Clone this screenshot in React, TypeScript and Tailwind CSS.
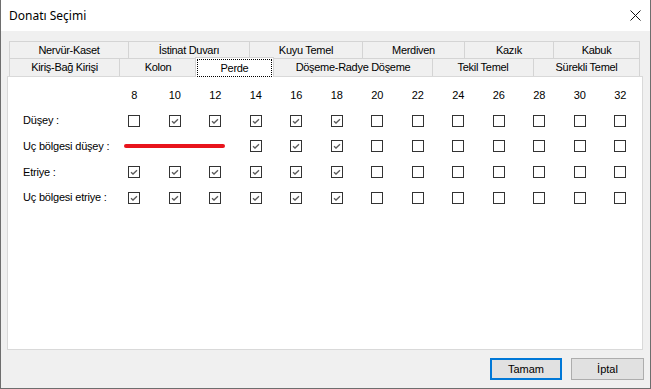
import React from "react";

const row1 = [
  { t: "Nervür-Kaset", w: 119 },
  { t: "İstinat Duvarı", w: 121 },
  { t: "Kuyu Temel", w: 113 },
  { t: "Merdiven", w: 102 },
  { t: "Kazık", w: 89 },
  { t: "Kabuk", w: 87 },
];
const row2 = [
  { t: "Kiriş-Bağ Kirişi", w: 110 },
  { t: "Kolon", w: 77 },
  { t: "Perde", w: 77, sel: true },
  { t: "Döşeme-Radye Döşeme", w: 159 },
  { t: "Tekil Temel", w: 101 },
  { t: "Sürekli Temel", w: 107 },
];

const nums = [8, 10, 12, 14, 16, 18, 20, 22, 24, 26, 28, 30, 32];
const rows: { label: string; checked: number[]; hidden?: number[] }[] = [
  { label: "Düşey :", checked: [10, 12, 14, 16, 18] },
  { label: "Uç bölgesi düşey :", checked: [14, 16, 18], hidden: [8, 10, 12] },
  { label: "Etriye :", checked: [8, 10, 12, 14, 16, 18] },
  { label: "Uç bölgesi etriye :", checked: [8, 10, 12, 14, 16, 18] },
];

function Box({ checked }: { checked: boolean }) {
  return (
    <div className="w-[12px] h-[12px] border border-[#333333] bg-white flex items-center justify-center">
      {checked && (
        <svg width="10" height="10" viewBox="0 0 10 10">
          <path d="M2 5.2 L4 7 L8 3.2" fill="none" stroke="#5a5a5a" strokeWidth="1.3" />
        </svg>
      )}
    </div>
  );
}

export default function App() {
  const font = { fontFamily: '"Liberation Sans", Arial, sans-serif' };
  return (
    <div
      className="w-[651px] h-[389px] flex flex-col border-l border-r border-b border-[#6e6e6e] bg-[#f0f0f0] text-black overflow-hidden"
      style={font}
    >
      {/* title bar */}
      <div className="h-[31px] bg-white flex items-center justify-between pl-[8px] pr-[9px] shrink-0">
        <span className="text-[12px] text-black" style={{ fontFamily: '"Noto Sans", "Open Sans", sans-serif' }}>
          Donatı Seçimi
        </span>
        <svg width="11" height="11" viewBox="0 0 11 11">
          <path d="M0.5 0.5 L10.5 10.5 M10.5 0.5 L0.5 10.5" stroke="#111" strokeWidth="1" />
        </svg>
      </div>

      {/* body */}
      <div className="flex-1 flex flex-col pt-[10px] px-[6px]">
        {/* tabs */}
        <div className="ml-[2px] flex flex-col text-[11px] tracking-[-0.3px]">
          <div className="flex h-[17px]">
            {row1.map((t, i) => (
              <div
                key={t.t}
                className={`h-[17px] flex items-center justify-center border-t border-l border-[#d4d4d4] bg-[#f0f0f0] ${
                  i === row1.length - 1 ? "border-r" : ""
                }`}
                style={{ width: t.w }}
              >
                {t.t}
              </div>
            ))}
          </div>
          <div className="flex h-[18px] items-start">
            {row2.map((t, i) =>
              t.sel ? (
                <div
                  key={t.t}
                  className="relative z-10 -mt-[1px] -mx-[1px] h-[20px] bg-white border-t border-l border-r border-[#d4d4d4] flex items-start justify-center pt-[1px] px-[1px]"
                  style={{ width: t.w + 2 }}
                >
                  <div className="w-full h-[18px] border border-dotted border-black flex items-center justify-center -mt-[0px]">
                    {t.t}
                  </div>
                </div>
              ) : (
                <div
                  key={t.t}
                  className={`h-[18px] flex items-center justify-center border-t border-l border-[#d4d4d4] bg-[#f0f0f0] ${
                    i === row2.length - 1 ? "border-r" : ""
                  }`}
                  style={{ width: t.w }}
                >
                  {t.t}
                </div>
              )
            )}
          </div>
        </div>

        {/* panel */}
        <div className="w-[636px] h-[274px] bg-white border border-[#d9d9d9] pl-[15px] pt-[5px]">
          <div className="grid grid-cols-[91px_repeat(13,40.5px)] grid-rows-[26px_25px_26px_26px_25px] text-[11px]">
            <div />
            {nums.map((n) => (
              <div key={n} className="flex items-center justify-center">
                {n}
              </div>
            ))}
            {rows.map((r, ri) => (
              <React.Fragment key={r.label}>
                <div className="flex items-center tracking-[-0.2px]">{r.label}</div>
                {ri === 1 ? (
                  <>
                    <div className="col-span-3 flex items-center justify-start pl-[10px]">
                      <div className="w-[101px] h-[4px] rounded-full bg-[#e8141c]" />
                    </div>
                    {nums.slice(3).map((n) => (
                      <div key={n} className="flex items-center justify-center">
                        <Box checked={r.checked.includes(n)} />
                      </div>
                    ))}
                  </>
                ) : (
                  nums.map((n) => (
                    <div key={n} className="flex items-center justify-center">
                      <Box checked={r.checked.includes(n)} />
                    </div>
                  ))
                )}
              </React.Fragment>
            ))}
          </div>
        </div>

        {/* buttons */}
        <div className="flex justify-end gap-[9px] mt-[8px] text-[11px]">
          <button className="w-[72px] h-[22px] bg-[#e1e1e1] border-2 border-[#0078d7] flex items-center justify-center">
            Tamam
          </button>
          <button className="w-[73px] h-[22px] bg-[#e1e1e1] border border-[#adadad] flex items-center justify-center">
            İptal
          </button>
        </div>
      </div>
    </div>
  );
}
